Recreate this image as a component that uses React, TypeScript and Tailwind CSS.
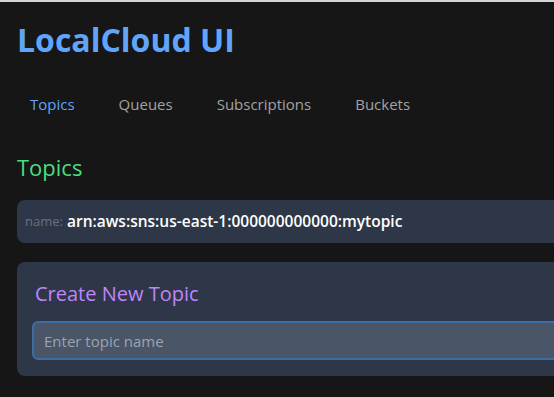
const tabs = ['Topics', 'Queues', 'Subscriptions', 'Buckets'];

export default function App() {
    return (
        <div className="min-h-[397px] overflow-hidden bg-[#161616] font-['Open_Sans',sans-serif]">
            <div className="h-[2px] bg-[#d4d4d4]" />
            <div className="w-[640px] px-[17px] pb-6">
                <h1 className="mt-[18px] h-10 text-[32px] font-bold leading-10 text-[#60a5fa]">LocalCloud UI</h1>
                <nav className="mt-[32px] flex gap-[18px]">
                    {tabs.map((tab, i) => (
                        <span
                            key={tab}
                            className={
                                i === 0
                                    ? 'px-[13px] text-[15px] leading-6 text-[#60a5fa]'
                                    : 'px-[13px] text-[15px] leading-6 text-[#a3a3a3]'
                            }
                        >
                            {tab}
                        </span>
                    ))}
                </nav>
                <h2 className="mt-[36px] h-[30px] text-[22px] leading-[30px] text-[#4ade80]">Topics</h2>
                <div className="mt-[18px] flex h-[43px] items-center gap-[4px] rounded-lg bg-[#2d3748] px-[8px]">
                    <span className="text-[13px] text-[#6b7280]">name:</span>
                    <span className="text-[15.5px] font-semibold text-white">arn:aws:sns:us-east-1:000000000000:mytopic</span>
                </div>
                <div className="mt-[19px] rounded-lg bg-[#2d3748] px-[15px] pb-[16px] pt-[18px]">
                    <h3 className="h-7 pl-[3px] text-[20px] leading-7 text-[#c084fc]">Create New Topic</h3>
                    <input
                        className="mt-[13px] h-[39px] w-full rounded-md border-2 border-[#3b6ea5] bg-[#4a5568] px-[10px] text-[15px] text-white outline-none placeholder:text-[#9ca3af]"
                        placeholder="Enter topic name"
                    />
                </div>
            </div>
        </div>
    );
}
